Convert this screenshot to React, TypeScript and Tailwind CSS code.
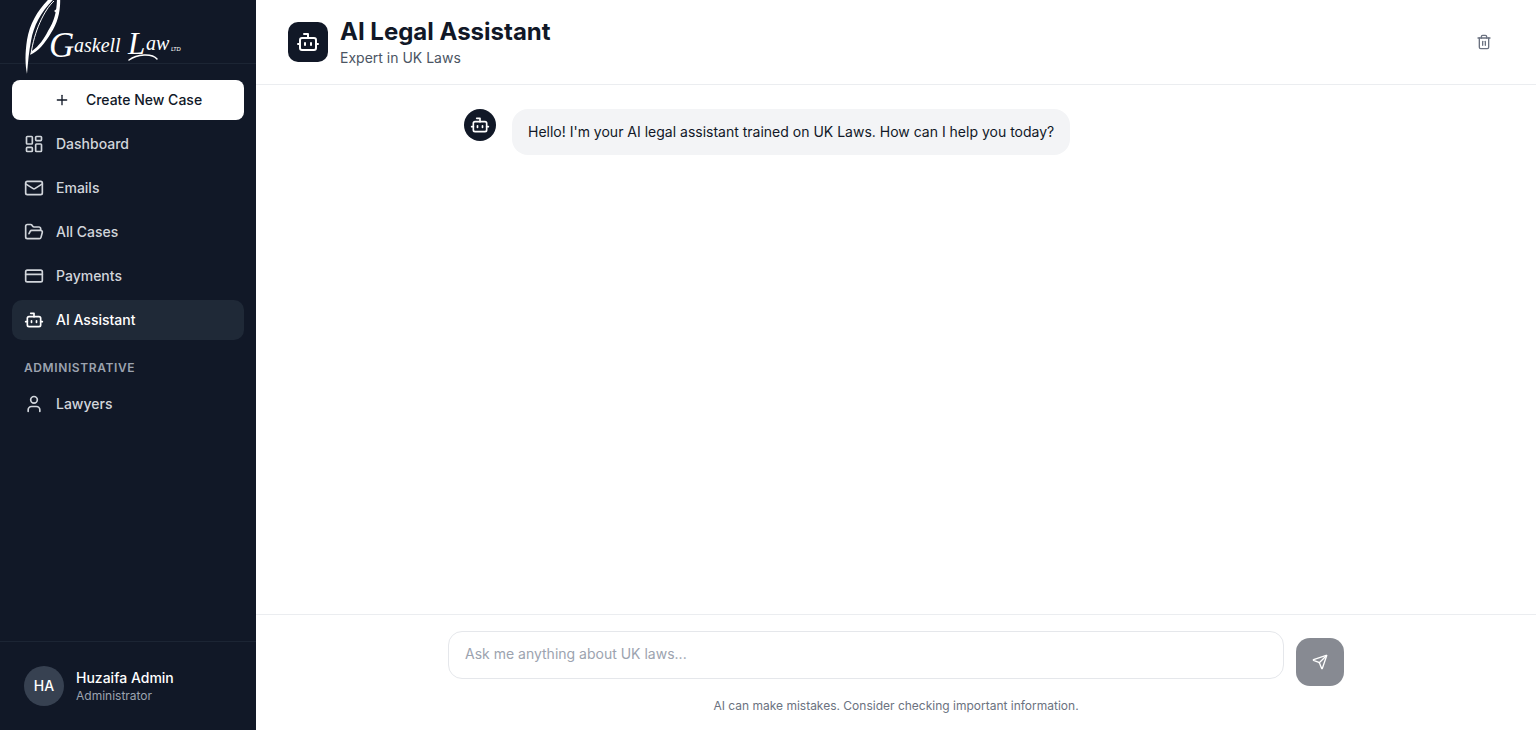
import React, { useState } from "react";
import {
  Bot,
  CreditCard,
  FolderOpen,
  LayoutDashboard,
  Mail,
  Plus,
  Send,
  Trash2,
  User,
  type LucideIcon,
} from "lucide-react";
import clsx from "clsx";

interface NavItem {
  label: string;
  icon: LucideIcon;
  href: string;
}

const mainNav: NavItem[] = [
  { label: "Dashboard", icon: LayoutDashboard, href: "#dashboard" },
  { label: "Emails", icon: Mail, href: "#emails" },
  { label: "All Cases", icon: FolderOpen, href: "#cases" },
  { label: "Payments", icon: CreditCard, href: "#payments" },
  { label: "AI Assistant", icon: Bot, href: "#assistant" },
];

const adminNav: NavItem[] = [{ label: "Lawyers", icon: User, href: "#lawyers" }];

const GREETING =
  "Hello! I'm your AI legal assistant trained on UK Laws. How can I help you today?";

/**
 * Quill mark with the firm name
 */
function Logo() {
  return (
    <svg
      viewBox="0 0 160 95"
      className="w-[160px] h-[95px] shrink-0"
      role="img"
      aria-label="Gaskell Law Ltd"
      fill="#ffffff"
    >
      {/* Quill */}
      <path d="M28 12 C15 24 6 38 3 56 C1 69 1 80 3 90 C4 78 5 67 7 57 C10 40 18 26 33 12 Z" />
      <path d="M33 12 L36 12 C37 26 34 38 27 49 C21 59 15 67 6 71 L8 67 C15 62 20 55 24 47 C31 36 33 26 33 12 Z" />
      <path
        d="M30 17 C20 26 10 48 7 70"
        fill="none"
        stroke="#ffffff"
        strokeWidth="1"
      />
      <path d="M30 27 L34 24 L34 30 Z" />

      {/* Name */}
      <g fontFamily="'Liberation Serif', serif" fontStyle="italic">
        <text x="25" y="73" fontSize="35">
          G
        </text>
        <text x="50" y="68" fontSize="20">
          askell
        </text>
        <text x="104" y="70" fontSize="31">
          L
        </text>
        <text x="122" y="66" fontSize="20">
          aw
        </text>
      </g>
      <path
        d="M105 76 C113 70 128 69 133 75"
        fill="none"
        stroke="#ffffff"
        strokeWidth="1.5"
        strokeLinecap="round"
      />
      <text
        x="147"
        y="67"
        fontSize="6"
        fontFamily="Lato, sans-serif"
        fontStyle="italic"
      >
        LTD
      </text>
    </svg>
  );
}

function NavLink({ item, active = false }: { item: NavItem; active?: boolean }) {
  const Icon = item.icon;

  return (
    <a
      href={item.href}
      aria-current={active ? "page" : undefined}
      className={clsx(
        "flex h-10 items-center gap-3 rounded-[10px] px-3 text-sm font-medium",
        active
          ? "bg-[#1f2937] text-white"
          : "text-[#d1d5db] hover:bg-[#1f2937] hover:text-white",
      )}
    >
      <Icon size={20} className="shrink-0" />
      {item.label}
    </a>
  );
}

function Sidebar() {
  return (
    <aside className="flex w-64 shrink-0 flex-col bg-[#111827]">
      <div className="flex h-16 items-center border-b border-[#1c2534] px-6">
        <Logo />
      </div>

      <nav className="flex flex-1 flex-col gap-1 px-3 pt-4">
        <button
          type="button"
          className="flex h-10 shrink-0 items-center justify-center gap-4 rounded-lg bg-white text-sm font-medium text-[#111827]"
        >
          <Plus size={16} />
          Create New Case
        </button>

        {mainNav.map((item) => (
          <NavLink
            key={item.label}
            item={item}
            active={item.label === "AI Assistant"}
          />
        ))}

        <div>
          <h2 className="px-3 pt-4 pb-2 text-xs font-semibold tracking-wider text-[#9ca3af] uppercase">
            Administrative
          </h2>
          {adminNav.map((item) => (
            <NavLink key={item.label} item={item} />
          ))}
        </div>
      </nav>

      <div className="flex items-center gap-3 border-t border-[#1c2534] p-6">
        <div className="flex size-10 items-center justify-center rounded-full bg-[#374151] text-sm font-medium text-white">
          HA
        </div>
        <div>
          <p className="text-sm font-medium text-white">Huzaifa Admin</p>
          <p className="text-xs text-[#9ca3af]">Administrator</p>
        </div>
      </div>
    </aside>
  );
}

export default function App() {
  const [draft, setDraft] = useState("");

  return (
    <div className="flex h-screen bg-white font-[Inter,sans-serif] text-[#111827]">
      <Sidebar />

      <main className="flex min-w-0 flex-1 flex-col">
        <header className="flex items-center justify-between border-b border-[#ebedf0] px-8 py-4">
          <div className="flex items-center gap-3">
            <div className="flex size-10 items-center justify-center rounded-[10px] bg-[#111827] text-white">
              <Bot size={24} />
            </div>
            <div>
              <h1 className="text-2xl font-bold">AI Legal Assistant</h1>
              <p className="text-sm text-[#4b5563]">Expert in UK Laws</p>
            </div>
          </div>
          <button
            type="button"
            aria-label="Clear chat"
            className="flex size-10 items-center justify-center rounded-lg text-[#6b7280]"
          >
            <Trash2 size={16} />
          </button>
        </header>

        {/* Messages */}
        <section className="flex-1 overflow-y-auto">
          <div className="mx-auto flex max-w-4xl items-start gap-4 px-4 py-6">
            <div className="flex size-8 shrink-0 items-center justify-center rounded-full bg-[#111827] text-white">
              <Bot size={20} />
            </div>
            <p className="rounded-2xl bg-[#f3f4f6] px-4 py-3 text-sm leading-[22px]">
              {GREETING}
            </p>
          </div>
        </section>

        {/* Composer */}
        <footer className="border-t border-[#ebedf0] py-4">
          <form
            className="mx-auto flex max-w-4xl items-end gap-3"
            onSubmit={(e) => e.preventDefault()}
          >
            <div className="flex-1 pb-[7px]">
              <textarea
                rows={1}
                value={draft}
                onChange={(e) => setDraft(e.target.value)}
                aria-label="Message"
                placeholder="Ask me anything about UK laws..."
                className="block h-12 w-full resize-none rounded-[14px] border border-[#e5e7eb] px-4 py-3 text-sm placeholder:text-[#9ca3af]"
              />
            </div>
            <button
              type="submit"
              aria-label="Send message"
              disabled={!draft.trim()}
              className="flex size-12 items-center justify-center rounded-[14px] bg-[#111827] text-white disabled:opacity-50"
            >
              <Send size={16} />
            </button>
          </form>
          <p className="mt-3 text-center text-xs text-[#6b7280]">
            AI can make mistakes. Consider checking important information.
          </p>
        </footer>
      </main>
    </div>
  );
}
